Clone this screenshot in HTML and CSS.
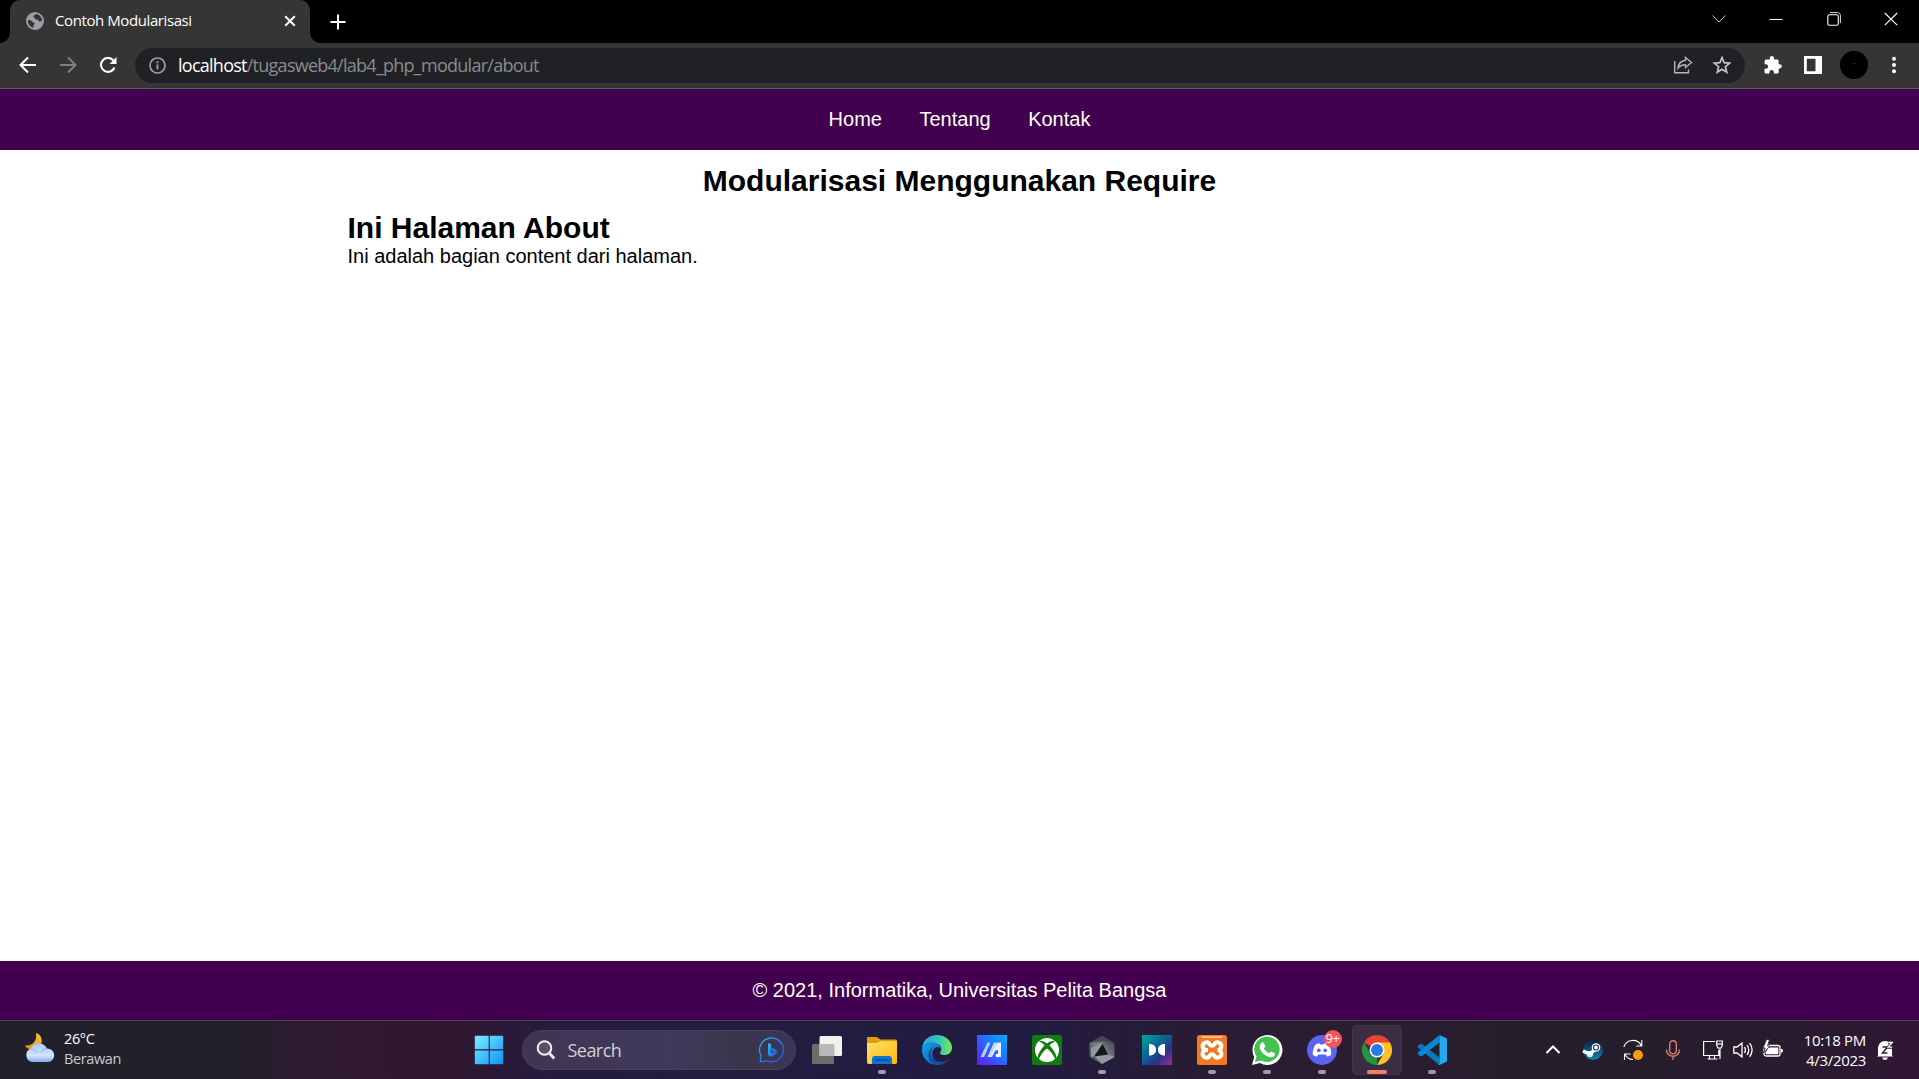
FILE: index.html
```html
<!DOCTYPE html>
<html lang="id">
<head>
<meta charset="utf-8">
<title>Contoh Modularisasi</title>
<link rel="stylesheet" href="styles.css">
</head>
<body>
<div class="tabstrip">
  <div class="tab">
    <svg class="favicon" width="18" height="18" viewBox="0 0 18 18"><circle cx="9" cy="9" r="9" fill="#9aa0a6"/><path d="M2 8c2 0 3 .2 4 1.500s2.500.8 2.500 2.300c0 1-1 1-1 2.200v1.800C4 15 1.500 12 2 8zM10 2c-.5 1.200-2.500.8-2.700 2.200C7.200 5.500 9 5 9 6.500c0 1.300 1.500.8 2.500.9 1.200.1.500 2 2 2.200 1 .2 1.500-.6 2.500-.6C16 5 13.500 2.500 10 2z" fill="#353535"/></svg>
    <span class="tab-title">Contoh Modularisasi</span>
    <svg class="tab-close" width="12" height="12" viewBox="0 0 12 12"><path d="M1.200 1.200l9.600 9.600M10.800 1.200l-9.600 9.600" stroke="#fff" stroke-width="2"/></svg>
  </div>
  <svg class="newtab" width="16" height="16" viewBox="0 0 16 16"><path d="M8 .5v15M.5 8h15" stroke="#fff" stroke-width="2"/></svg>
  <div class="window-controls">
    <svg width="14" height="14" viewBox="0 0 14 14"><path d="M.7 3.500l6.300 6.500 6.300-6.500" fill="none" stroke="#ccc"/></svg>
    <svg width="14" height="14" viewBox="0 0 14 14"><path d="M.5 7.500h13" stroke="#fff"/></svg>
    <svg width="14" height="14" viewBox="0 0 14 14"><rect x=".8" y="2.800" width="10.500" height="10.500" rx="1.800" fill="none" stroke="#fff" stroke-width="1.100"/><path d="M3 .6h7.500c1.800 0 2.900 1.100 2.900 2.900V11" fill="none" stroke="#ddd"/></svg>
    <svg width="14" height="14" viewBox="0 0 14 14"><path d="M.8 1l12.400 12.200M13.200 1L.8 13.200" stroke="#fff" stroke-width="1.100"/></svg>
  </div>
</div>
<div class="toolbar">
  <div class="nav-buttons">
    <svg width="18" height="18" viewBox="0 0 18 18" fill="none" stroke="#fff" stroke-width="2"><path d="M17 9H2M9 1.500L1.500 9 9 16.500"/></svg>
    <svg width="18" height="18" viewBox="0 0 18 18" fill="none" stroke="#808080" stroke-width="2"><path d="M1 9h15M9 1.500L16.500 9 9 16.500"/></svg>
    <svg width="18" height="18" viewBox="0 0 18 18"><path d="M15.500 11.500A7 7 0 1 1 14.200 4.200" fill="none" stroke="#fff" stroke-width="2.100"/><path d="M17.500 1v7h-7z" fill="#fff"/></svg>
  </div>
  <div class="omnibox">
    <svg width="17" height="17" viewBox="0 0 17 17"><circle cx="8.500" cy="8.500" r="7.500" fill="none" stroke="#9aa0a6" stroke-width="1.700"/><path d="M8.500 7.500v5M8.500 4.300v1.900" stroke="#9aa0a6" stroke-width="1.900"/></svg>
    <span class="url"><span class="host">localhost</span>/tugasweb4/lab4_php_modular/about</span>
    <svg class="share" width="20" height="18" viewBox="0 0 20 18" fill="none" stroke="#b5b6b8" stroke-width="1.400"><path d="M1.700 5v11.800h13.800V13.500"/><path d="M12.500 1.500l6 5-6 5V8.800C9 8.800 7 9.800 5 12c.4-4.200 3.200-7.200 7.500-7.800z"/></svg>
    <svg width="18" height="18" viewBox="0 0 18 18"><path d="M9 1.500l2.100 5.200 5.500.4-4.200 3.600 1.300 5.500L9 13.300l-4.700 2.900 1.300-5.500L1.400 7.100l5.500-.4z" fill="none" stroke="#c5c6c8" stroke-width="1.700"/></svg>
  </div>
  <div class="extensions">
    <svg width="18" height="18" viewBox="0 0 18 18"><path d="M15.700 8.200h-1V5c0-.9-.7-1.600-1.600-1.600H10V2.200a2.100 2.100 0 0 0-4.200 0v1.200H2.200C1.300 3.400.6 4.100.6 5v3.200h1.200a2.250 2.250 0 0 1 0 4.500H.5V16c0 .9.700 1.600 1.600 1.600h3.300v-1.300a2.250 2.250 0 0 1 4.500 0v1.300h3.200c.9 0 1.600-.7 1.600-1.600v-3.500h1a2.100 2.100 0 0 0 0-4.300z" fill="#fff"/></svg>
    <svg width="18" height="18" viewBox="0 0 18 18"><path fill="#fff" fill-rule="evenodd" d="M0 0h18v18H0zM2.800 2.800v12.400h8.700V2.800z"/></svg>
    <svg width="28" height="28" viewBox="0 0 28 28"><circle cx="14" cy="14" r="14"/><path d="M12.500 12.500h3" stroke="#292929"/></svg>
    <svg width="18" height="18" viewBox="0 0 18 18" fill="#fff"><circle cx="9" cy="2.800" r="2"/><circle cx="9" cy="9" r="2"/><circle cx="9" cy="15.200" r="2"/></svg>
  </div>
</div>
<div class="page">
  <nav class="site-nav"><a>Home</a><a>Tentang</a><a>Kontak</a></nav>
  <main class="container">
    <h1 class="site-title">Modularisasi Menggunakan Require</h1>
    <h2 class="page-title">Ini Halaman About</h2>
    <p class="page-text">Ini adalah bagian content dari halaman.</p>
  </main>
  <footer class="site-footer"><span>© 2021, Informatika, Universitas Pelita Bangsa</span></footer>
</div>
<div class="taskbar">
  <div class="weather">
    <svg width="32" height="30" viewBox="0 0 32 30">
      <defs><linearGradient id="moon" x1="0" y1="1" x2="1" y2="0"><stop stop-color="#f5821e"/><stop offset="1" stop-color="#f7c83a"/></linearGradient><linearGradient id="cloud" x1="0" y1="0" x2="0" y2="1"><stop stop-color="#a8c8fa"/><stop offset=".65" stop-color="#d4e3fc"/><stop offset="1" stop-color="#84aaf0"/></linearGradient></defs>
      <path d="M12 0c4 1 6.500 5 5.500 9.500C16.300 15 10 18 5 16 3 15.200 1.700 14 1 12.300 8 13.500 13.500 8 12 0z" fill="url(#moon)"/>
      <path d="M8 29a7 7 0 0 1-1.200-13.400A9 9 0 0 1 23 15.500 6.800 6.800 0 0 1 24.500 29z" fill="url(#cloud)"/><path d="M7 16c3 0 5 1.500 6 4M23 15.500c-3 .2-5 1.500-6 4" stroke="#86aef5" fill="none"/>
    </svg>
    <div class="weather-text"><span class="temp">26°C</span><span class="sky">Berawan</span></div>
  </div>
  <div class="apps">
    <svg class="start" width="30" height="30" viewBox="0 0 30 30"><defs><linearGradient id="win" x1="0" y1="0" x2="1" y2="1"><stop stop-color="#7af0ff"/><stop offset="1" stop-color="#0a93fa"/></linearGradient></defs><path d="M1.500 .8h13.200v13.500H.8V1.500zM15.800.8h12.500l.9.700v12.800H15.800zM.8 15.600h13.900v13.700H1.500l-.7-.7zM15.800 15.600h13.400v13l-.9.700H15.800z" fill="url(#win)"/></svg>
    <div class="search">
      <svg width="20" height="20" viewBox="0 0 20 20"><circle cx="8.500" cy="8" r="6.800" fill="#ffffff22" stroke="#eee" stroke-width="2"/><path d="M13.200 13l5 5.500" stroke="#eee" stroke-width="2.700"/></svg>
      <span>Search</span>
      <svg class="bing" width="26" height="26" viewBox="0 0 26 26"><defs><linearGradient id="bing" x1="0" y1="0" x2="1" y2="1"><stop stop-color="#22bdf0"/><stop offset="1" stop-color="#244de0"/></linearGradient></defs><path d="M1.200 24.700l.9-6A11.900 11.900 0 1 1 8 23.900c-2 .7-4.300.9-6.800.8z" fill="none" stroke="url(#bing)" stroke-width="1.300"/><path d="M9 6l3.200 1.300v8.900L15 14.400l-1.600-.8-1-2.800 4.300 1.600c1.200.5 1.700 1.300 1.500 2.600-.2 1-.8 1.700-1.700 2.200L12.200 20 9 18z" fill="url(#bing)"/></svg>
    </div>
    <div class="app"><svg viewBox="0 0 30 30"><rect y="9" width="22" height="20" rx="1.500" fill="#6c6c6c"/><rect x="7.500" y="1" width="22.500" height="20" rx="1.500" fill="#f1f1f1"/><path d="M7.500 9H21a1.500 1.500 0 0 1 1.500 1.500V21H9a1.500 1.500 0 0 1-1.500-1.500z" fill="#b9b9b9"/></svg></div>
    <div class="app open"><svg viewBox="0 0 30 30"><defs><linearGradient id="folder" x1="0" y1="0" x2="1" y2="1"><stop stop-color="#ffdf70"/><stop offset="1" stop-color="#ffba0a"/></linearGradient></defs><path d="M0 3.200C0 2.500.5 2 1.200 2h8.500l3.800 2.500h15c.8 0 1.500.6 1.500 1.400V12H0z" fill="#dda108"/><path d="M0 8h10l3-1.800h17v21.300c0 .8-.7 1.400-1.500 1.400h-27A1.500 1.500 0 0 1 0 27.500z" fill="url(#folder)"/><path d="M5 28.900V24c0-1.800 1.200-3 3-3h14c1.800 0 3 1.200 3 3v4.900z" fill="#0f72cf"/><path d="M8.500 25h13" stroke="#084687" stroke-width="1.300"/></svg></div>
    <div class="app"><svg viewBox="0 0 30 30"><defs><linearGradient id="edgeTop"><stop stop-color="#24a7e8"/><stop offset=".55" stop-color="#2ec5bd"/><stop offset="1" stop-color="#78ea50"/></linearGradient><linearGradient id="edgeBottom" x1="0" y1="0" x2="1" y2="1"><stop stop-color="#1aa0e8"/><stop offset="1" stop-color="#0a59b0"/></linearGradient></defs><path d="M0 13C1 5 7 0 15 0s15 6 15 12.500c0 5-3.500 7.500-7.500 7.500-4 0-5.500-1.500-4-3.500 2-3 0-8-6-8C7 8.500 2 10 0 13z" fill="url(#edgeTop)"/><path d="M0 15C0 9.500 5 6.500 10 7c5 .5 8.500 3.500 8.300 7-2.500-3.500-8-1-8 4.500 0 6 5 11 11.200 9.800C19 29.500 17 30 15 30A15 15 0 0 1 0 15z" fill="url(#edgeBottom)"/><path d="M12 11.500c-4 3-4.300 10 .5 13.500 5 3.500 11.500 2 15.300-2C25 27.500 20 30 15 30 9 29 6 24 6.500 19 7 15 9 12.500 12 11.500z" fill="#0f529b"/><path d="M18.300 14c-2.500-3.200-6.800-1.800-6.800 3 0 4 4.500 6.500 9 6 3-.3 5.500-1.200 7-2.500-1.500.5-3.500.6-5.500.4-3.500-.4-5-2-3.700-4.200z" fill="#231c42"/></svg></div>
    <div class="app"><svg viewBox="0 0 30 30"><defs><linearGradient id="asus" x1="0" y1="1" x2="1" y2="0"><stop stop-color="#6418fa"/><stop offset=".5" stop-color="#2868ff"/><stop offset="1" stop-color="#00aeff"/></linearGradient></defs><path fill="url(#asus)" d="M0 0h30v30H0z"/><path d="M10.500 7.500h3L7 22H3.500z" fill="#b9ccff"/><path d="M20.500 7.500H24V22h-3v-7l-2.700.5L15 22h-3.700l3.200-7z" fill="#e5edff"/><path d="M17 7.500h3L13.500 22h-3z" fill="#ccd9ff"/><circle cx="20.200" cy="20.500" r="1.700" fill="#fff"/></svg></div>
    <div class="app"><svg viewBox="0 0 30 30"><rect width="30" height="30" rx="2.500" fill="#107c10"/><circle cx="15" cy="15" r="12" fill="#fff"/><path d="M7 6c3-1 6 .8 8 2.500C17 6.800 20 5 23 6l-1 1c-1.500.3-3.200 1.800-4.500 3.300 3.500 3.700 6.500 8.200 7 12.200l-1.500 2c-.5-3.500-4.500-8.300-8-11-3.500 2.700-7.500 7.500-8 11l-1.500-2c.5-4 3.500-8.500 7-12.200C11.200 8.800 9.500 7.300 8 7z" fill="#107c10"/></svg></div>
    <div class="app open"><svg viewBox="0 0 30 30"><defs><linearGradient id="crate" x1="1" y1="0" x2="0" y2="1"><stop stop-color="#34383e"/><stop offset=".5" stop-color="#7a8188"/><stop offset="1" stop-color="#3a3e44"/></linearGradient></defs><path d="M15 1l12.500 7v14L15 29 2.500 22V8z" fill="url(#crate)"/><path d="M15 1l12.500 7L16 6 2.500 8z" fill="#454a50"/><path d="M16 7L4 13v9l5-1z" fill="#91979e"/><path d="M7 21l14-1.500 6.500 2.500L15 29z" fill="#92999f"/><path d="M15.500 9L21 19.500 7 21.500z" fill="#15171d"/></svg></div>
    <div class="app"><svg viewBox="0 0 30 30"><defs><linearGradient id="dolby" x1="0" y1="0" x2="1" y2="1"><stop stop-color="#00a999"/><stop offset=".4" stop-color="#086895"/><stop offset=".68" stop-color="#2b328c"/><stop offset="1" stop-color="#9b2d8d"/></linearGradient></defs><path fill="url(#dolby)" d="M0 0h30v30H0z"/><path d="M7 9c5 0 7 2.500 7 5.700s-2 5.800-7 5.800zM23 9c-5 0-7 2.500-7 5.700s2 5.800 7 5.800z" fill="#fff"/></svg></div>
    <div class="app open"><svg viewBox="0 0 30 30"><rect width="30" height="30" rx="2.500" fill="#f47721"/><path d="M4 1.200h22l-1 1.800H5z" fill="#ffc49b"/><path d="M11 15H9.500a3.800 3.800 0 1 1 3.300-5.500c1 1.800 3.400 1.800 4.400 0A3.800 3.800 0 1 1 20.500 15 3.800 3.800 0 1 1 17.200 20.500c-1-1.800-3.400-1.800-4.400 0A3.800 3.800 0 1 1 9.500 15" fill="none" stroke="#fff" stroke-width="4"/></svg></div>
    <div class="app open"><svg viewBox="0 0 30 30"><path d="M0 30l2.200-8A15 15 0 1 1 8 28z" fill="#fff"/><path d="M3 27l1.500-5.500A12.700 12.700 0 1 1 9 25.500z" fill="#40c351"/><path d="M9.500 7.800c.6-.6 1.900-.6 2.300.2l1.400 3c.2.600-.2 1.300-1.300 2.400 1.300 2.300 3 3.900 5.300 4.900 1.100-1.300 1.700-1.900 2.400-1.600l2.800 1.400c.7.400.6 1.400.2 2.200-.9 1.800-3.200 2.400-5 1.900-5-1.500-8-4.400-9.500-8.200-.9-2.400-.2-4.700 1.400-6.200z" fill="#fff"/></svg></div>
    <div class="app open"><svg viewBox="0 0 30 30"><circle cx="15" cy="15" r="15" fill="#5865f2"/><path d="M8.500 9.500c1.400-.8 2.700-1 4-1.200l.8 1.300h3.400l.8-1.300c1.300.2 2.600.4 4 1.200 2 3.300 3 6.300 2.700 10.200-1.500 1.100-3 1.600-4.200 1.900l-1.200-2h-7.600l-1.200 2c-1.300-.3-2.700-.8-4.200-1.900C5.500 15.800 6.500 12.800 8.500 9.500z" fill="#fff"/><circle cx="11.800" cy="15.300" r="1.900" fill="#5865f2"/><circle cx="18.200" cy="15.300" r="1.900" fill="#5865f2"/></svg><span class="badge">9+</span></div>
    <div class="app open active"><svg viewBox="0 0 30 30"><path d="M15 15L2 7.500A15 15 0 0 1 28 7.500z" fill="#ea4335"/><path d="M2 7.500L8.500 19 15 22.500V30A15 15 0 0 1 2 7.500z" fill="#269447"/><path d="M15 7.500h13A15 15 0 0 1 15 30l6.500-11.300z" fill="#fcc31f"/><circle cx="15" cy="15" r="7.500" fill="#fff"/><circle cx="15" cy="15" r="6" fill="#247be9"/></svg></div>
    <div class="app open"><svg viewBox="0 0 30 30"><path d="M1 11l2-2q1-.8 2 0l17.500 13.500V30L.8 12.500Q.2 11.800 1 11z" fill="#0879be"/><path d="M1 19l2 2q1 .8 2 0L22.500 7.500V0L.8 17.500Q.2 18.200 1 19z" fill="#0689d1"/><path d="M22.500 0L29 3q1 .5 1 1.500v21q0 1-1 1.500l-6.500 3q-1 0-1.300-.7l1.300-.8z" fill="#29a8f2"/></svg></div>
  </div>
  <div class="tray">
    <svg width="20" height="20" viewBox="0 0 20 20"><path d="M3.500 13L10 6.500l6.500 6.500" fill="none" stroke="#fff" stroke-width="2"/></svg>
    <svg width="20" height="20" viewBox="0 0 20 20"><defs><linearGradient id="steam" x1="0" y1="0" x2="0" y2="1"><stop stop-color="#101c3c"/><stop offset="1" stop-color="#1285b5"/></linearGradient></defs><circle cx="10" cy="10" r="10" fill="url(#steam)"/><path d="M0 11l7 3 6.500-6" stroke="#fff" stroke-width="3.500" fill="none"/><circle cx="13" cy="7.500" r="4.300" fill="#fff"/><circle cx="13" cy="7.500" r="2.500" fill="none" stroke="#18345c" stroke-width="1.200"/><circle cx="7" cy="14" r="2.400" fill="none" stroke="#fff" stroke-width="1.300"/></svg>
    <svg width="20" height="20" viewBox="0 0 20 20"><path d="M.8 7A9.500 9.500 0 0 1 18.500 6M18.800 0v6h-5.600M1.500 20v-6h6M2 14.500A9.500 9.500 0 0 0 10 19.500" fill="none" stroke="#fff" stroke-width="1.100"/><circle cx="15" cy="15" r="5" fill="#ff9c09"/></svg>
    <svg width="20" height="20" viewBox="0 0 20 20" fill="none" stroke="#d97f62" stroke-width="1.400"><rect x="6.700" y=".7" width="6.600" height="13" rx="3.300"/><path d="M3.500 9.500c0 9 13 9 13 0M10 16v4"/></svg>
    <svg width="20" height="20" viewBox="0 0 20 20" fill="none" stroke="#fff" stroke-width="1.200"><path d="M12 1.500H.6v14h15.200V10M4.500 19h10M6.500 15.500V19M11.500 15.500V19M17 9v10"/><path d="M13.700 1h5.600v4.500l-1.500 2.700h-2.600l-1.500-2.700z"/><path d="M14 4h5"/></svg>
    <svg width="20" height="20" viewBox="0 0 20 20" fill="none" stroke="#fff" stroke-width="1.300"><path d="M.8 7v6H4l5 4V3L4 7zM11.500 7q2 3 0 6M14 5q3.500 5 0 10M16.600 3.200q5 6.800 0 13.600"/></svg>
    <svg width="20" height="20" viewBox="0 0 20 20"><rect x="1" y="5.500" width="16" height="10.500" rx="2" fill="none" stroke="#fff" stroke-width="1.300"/><path d="M5.500 7.500h9.800v6.700H2.700v-2z" fill="#fff"/><path d="M18 8.700q2 0 2 2t-2 2z" fill="#fff"/><path d="M3.500-.5L0 8h2.200L.5 13 7 6H4.500L6.500-.5z" fill="#fff" stroke="#291d2d" stroke-width=".8"/></svg>
    <div class="clock"><span>10:18 PM</span><span>4/3/2023</span></div>
    <svg width="20" height="20" viewBox="0 0 20 20"><path d="M2 15.500V9c0-5 3-8 7-8s7 3 7 8v6.500l1.200 1H.8zM6 17.500h6q-1 2.500-3 2.500t-3-2.500z" fill="#fff"/><path d="M6.500 7h5l-5 6h5" fill="none" stroke="#30213a" stroke-width="1.500"/><path d="M12.200 2.500h4l-4 4.700h4" fill="none" stroke="#30213a" stroke-width="3"/><path d="M12.200 2.500h4l-4 4.700h4" fill="none" stroke="#fff" stroke-width="1.300"/></svg>
  </div>
</div>
</body>
</html>
```
FILE: styles.css
```css
* { box-sizing: border-box; }
body {
  margin: 0;
  height: 1079px;
  display: flex;
  flex-direction: column;
  overflow: hidden;
  background: #fff;
  font-family: "Open Sans", "Noto Sans", sans-serif;
}
svg { display: block; flex: none; overflow: visible; }

/* Browser window */
.tabstrip { display: flex; align-items: center; height: 43px; padding-left: 10px; background: #000; }
.tab {
  position: relative;
  display: flex;
  align-items: center;
  width: 300px;
  height: 43px;
  padding: 0 14px 1px 16px;
  background: #353535;
  border-radius: 10px 10px 0 0;
  color: #fff;
}
.tab::before, .tab::after { content: ""; position: absolute; bottom: 0; width: 10px; height: 10px; }
.tab::before { left: -10px; background: radial-gradient(circle at 0 0, #000 9.5px, #353535 10px); }
.tab::after { right: -10px; background: radial-gradient(circle at 100% 0, #000 9.5px, #353535 10px); }
.tab-title { margin-left: 11px; padding-bottom: 2px; font-size: 15px; letter-spacing: -0.41px; white-space: nowrap; }
.tab-close { margin-left: auto; }
.newtab { margin-left: 20px; }
.window-controls { display: flex; gap: 43.3px; margin: 0 21px 6px auto; }
.toolbar {
  display: flex;
  align-items: center;
  height: 46px;
  padding-bottom: 1px;
  background: #353535;
  border-bottom: 1px solid #5c5c5c;
}
.nav-buttons { display: flex; gap: 22px; padding-left: 19px; width: 135px; }
.omnibox {
  display: flex;
  align-items: center;
  width: 1610px;
  height: 35px;
  padding: 0 14px;
  border-radius: 18px;
  background: #202124;
}
.url { margin-left: 12px; font-size: 18px; letter-spacing: -0.74px; color: #898b8e; white-space: nowrap; }
.host { color: #fff; }
.share { margin: 0 20px 0 auto; }
.extensions { display: flex; align-items: center; gap: 22px; padding-left: 18.5px; }
.extensions svg:nth-child(3) { margin: 0 -5px 0 -4px; }

/* Site */
.page { flex: 1; display: flex; flex-direction: column; font-family: Arial, "Liberation Sans", sans-serif; }
.site-nav {
  display: flex;
  justify-content: center;
  align-items: center;
  gap: 37.5px;
  height: 61px;
  background: #430050;
  color: #fff;
  font-size: 20px;
}
.container { width: 1224px; margin: 0 auto; flex: 1; }
.site-title, .page-title { margin: 0; font-size: 30px; line-height: 36px; }
.site-title { margin-top: 13px; text-align: center; }
.page-title { margin-top: 11px; }
.page-text { margin: -1px 0 0; font-size: 20px; line-height: 22px; }
.site-footer {
  display: flex;
  justify-content: center;
  align-items: center;
  height: 59px;
  background: #430050;
  color: #fff;
  font-size: 20px;
}

/* Taskbar */
.taskbar {
  display: flex;
  align-items: center;
  height: 59px;
  border-top: 1px solid #494650;
  background: linear-gradient(90deg, #20212a 0, #20212a 225px, #2f1a31 310px, #311731 450px, #241c40 560px, #231c42 1030px, #281c35 1180px, #2b1d31 1350px, #251e2c 1550px, #281c2e 1740px, #301734 1919px);
  color: #fff;
}
.weather { display: flex; width: 474px; padding: 2px 0 0 24px; gap: 8px; }
.weather-text { display: flex; flex-direction: column; font-size: 14.5px; line-height: 20px; margin-top: -4px; letter-spacing: -0.38px; }
.sky { color: #cbcace; }
.apps { display: flex; align-items: center; }
.search {
  display: flex;
  align-items: center;
  width: 274px;
  height: 40px;
  margin: 0 6px 0 17.5px;
  padding: 0 10px 0 13px;
  border: 1px solid #484253;
  border-radius: 20px;
  background: linear-gradient(90deg, #403552, #40395b 55%, #3a344c 80%, #3b3658);
  color: #d2d0d7;
  font-size: 18px;
  letter-spacing: -0.55px;
}
.search span { margin-left: 12px; padding-bottom: 1px; }
.bing { margin-left: auto; }
.app { position: relative; display: grid; place-items: center; width: 50px; height: 50px; margin-right: 5px; border-radius: 6px; }
.app svg { width: 30px; height: 30px; }
.app.open::after {
  content: "";
  position: absolute;
  bottom: 1px;
  left: 21px;
  width: 8px;
  height: 4px;
  border-radius: 2px;
  background: #a09aaa;
}
.app.active { background: #3a2d43; box-shadow: inset 0 0 0 1px #43364b; }
.app.active::after { left: 15px; width: 20px; background: #f37f63; }
.badge {
  position: absolute;
  left: 27px;
  top: 5px;
  width: 18px;
  height: 18px;
  border-radius: 50%;
  background: #f1555b;
  font-size: 13px;
  line-height: 17px;
  text-align: center;
  letter-spacing: -0.5px;
}
.tray { display: flex; align-items: center; margin-left: auto; padding-right: 23px; }
.tray svg { margin-right: 20px; }
.tray svg:nth-child(5), .tray svg:nth-child(6) { margin-right: 10px; }
.tray svg:nth-child(7) { margin-right: 0; }
.tray svg:last-child { margin: 0 0 0 10px; }
.clock { width: 83px; font-size: 15px; line-height: 20px; text-align: right; letter-spacing: -0.3px; white-space: nowrap; display: flex; flex-direction: column; padding-bottom: 1px; }
```
